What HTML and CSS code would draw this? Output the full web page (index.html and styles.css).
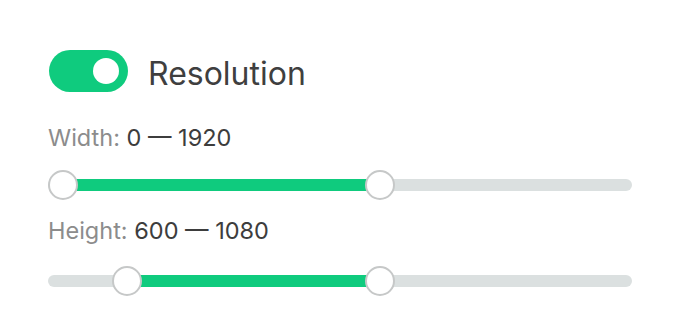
FILE: index.html
```html
<!DOCTYPE html>
<html>
<head>
<meta charset="utf-8">
<link rel="stylesheet" href="styles.css">
</head>
<body>
<div class="panel">
  <div class="header">
    <div class="switch on"><span class="switch-knob"></span></div>
    <span class="title">Resolution</span>
  </div>
  <div class="label label-first"><span class="key">Width:</span> <span class="val">0 — 1920</span></div>
  <div class="slider slider-first">
    <div class="track">
      <div class="fill" style="left: 15px; width: 317px;"></div>
    </div>
    <div class="rail">
      <span class="thumb" style="left: 0%;"></span>
      <span class="thumb" style="left: 57.2%;"></span>
    </div>
  </div>
  <div class="label label-second"><span class="key">Height:</span> <span class="val">600 — 1080</span></div>
  <div class="slider slider-second">
    <div class="track">
      <div class="fill" style="left: 78.7px; width: 253.3px;"></div>
    </div>
    <div class="rail">
      <span class="thumb" style="left: 11.5%;"></span>
      <span class="thumb" style="left: 57.2%;"></span>
    </div>
  </div>
</div>
</body>
</html>
```
FILE: styles.css
```css
html, body {
  margin: 0;
  padding: 0;
  background: #ffffff;
}
body {
  font-family: Inter, "Noto Sans", "Liberation Sans", sans-serif;
  width: 680px;
  height: 336px;
  overflow: hidden;
}
.panel {
  padding: 50px 48px 0 48px;
  display: flex;
  flex-direction: column;
}
.header {
  display: flex;
  align-items: center;
  gap: 20px;
  height: 42px;
}
.switch {
  width: 79px;
  height: 42px;
  border-radius: 21px;
  background: #0fcb7e;
  position: relative;
  flex: none;
  margin-left: 1px;
}
.switch-knob {
  position: absolute;
  top: 8px;
  right: 9px;
  width: 26px;
  height: 26px;
  border-radius: 50%;
  background: #ffffff;
}
.title {
  font-size: 32px;
  color: #3f3f3f;
  line-height: 42px;
  padding-top: 5px;
}
.label {
  font-size: 23.5px;
  line-height: 28px;
  height: 28px;
}
.label-first { margin-top: 32px; }
.label-second { margin-top: 17px; }
.key { color: #8c8c8c; }
.val { color: #3d3d3d; }
.slider {
  position: relative;
  height: 30px;
  display: flex;
  align-items: center;
}
.slider-first { margin-top: 18px; }
.slider-second { margin-top: 21px; }
.track {
  position: relative;
  width: 100%;
  height: 12px;
  border-radius: 6px;
  background: #dbe0e0;
}
.fill {
  position: absolute;
  top: 0;
  height: 12px;
  background: #0fcb7e;
}
.rail {
  position: absolute;
  left: 15px;
  right: 15px;
  top: 0;
  bottom: 0;
}
.thumb {
  position: absolute;
  top: 0;
  width: 30px;
  height: 30px;
  box-sizing: border-box;
  border-radius: 50%;
  border: 2px solid #c6c8c8;
  background: #ffffff;
  transform: translateX(-50%);
}
```
